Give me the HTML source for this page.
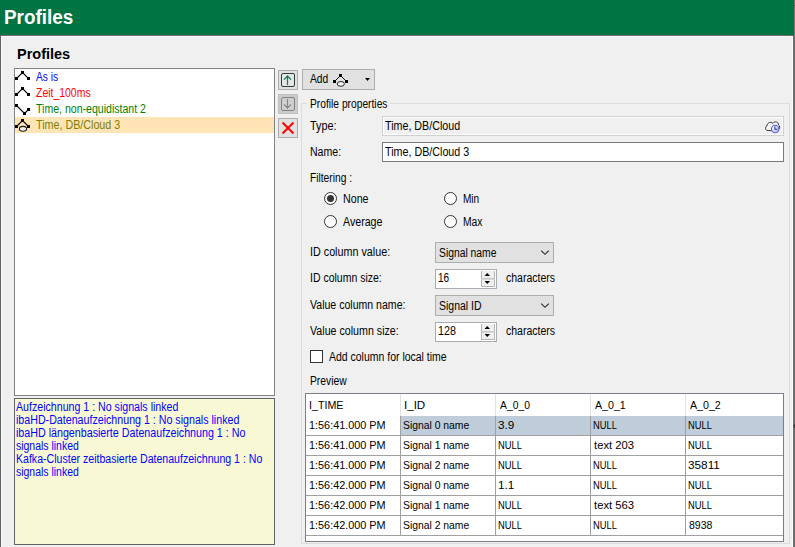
<!DOCTYPE html>
<html><head><meta charset="utf-8">
<style>
*{margin:0;padding:0;box-sizing:border-box}
html,body{width:795px;height:547px;overflow:hidden;background:#f0f0f0;position:relative;font-family:"Liberation Sans",sans-serif;font-size:11px;color:#000}
.a{position:absolute}
.t{position:absolute;white-space:pre;line-height:13px;font-size:11px;transform-origin:0 0}
#hdr{left:0;top:0;width:794px;height:35px;background:#017443}
#hdrR{left:794px;top:0;width:1px;height:547px;background:#7a7478}
#topline{left:0;top:35px;width:794px;height:1px;background:#6e6a6e}
#hl{left:1px;top:36px;width:792px;height:1px;background:#f8f8f8}
#lb{left:0;top:35px;width:1px;height:512px;background:#646464}
#lw{left:1px;top:36px;width:1px;height:511px;background:#f8f8f8}
#rb{left:793px;top:35px;width:2px;height:512px;background:#6d6d6d}
#rw{left:792px;top:36px;width:1px;height:511px;background:#fafafa}
.box{position:absolute;background:#fff;border:1px solid #828282}
.btn{position:absolute;background:#e1e1e1;border:1px solid #adadad}
.grp{position:absolute;border:1px solid #dcdcdc}
.radio{position:absolute;width:13px;height:13px;border:1px solid #333;border-radius:50%;background:#fff}
.combo{position:absolute;background:#e1e1e1;border:1px solid #adadad}
.spin{position:absolute;background:#fff;border:1px solid #a9acb3}
.tbl{position:absolute;background:#fff;border:1px solid #7a7f87}
.row{position:absolute;left:0;width:477px;height:1px;background:#a0a0a0}
.col{position:absolute;width:1px;background:#a0a0a0}
.sel{position:absolute;background:#bfcddb}
</style></head><body>
<div id="hdr" class="a"></div>
<div id="hdrR" class="a"></div>
<div class="a" style="left:794px;top:5px;width:1px;height:1px;background:#555"></div>
<div id="topline" class="a"></div>
<div id="hl" class="a"></div>
<div id="lb" class="a"></div>
<div id="lw" class="a"></div>
<div id="rw" class="a"></div>
<div id="rb" class="a"></div>


<div class="a" style="left:794px;top:424px;width:1px;height:4px;background:#3a3a3a"></div>
<div class="a" style="left:793px;top:425px;width:1px;height:2px;background:#555"></div>
<!-- tree list -->
<div class="box" style="left:14px;top:68px;width:261px;height:328px"></div>
<div class="a" style="left:15px;top:117px;width:259px;height:16px;background:#ffe4b5"></div>
<svg class="a" style="left:14px;top:68px" width="20" height="66" viewBox="0 0 20 66">
 <g stroke="#000" stroke-width="1.1" fill="none">
  <polyline points="2.5,10.5 8.5,4.5 14.5,10.5"/>
  <polyline points="2.5,26.5 8.5,20.5 14.5,26.5"/>
  <polyline points="2.5,37.5 10.5,45.5 14.5,41.5"/>
  <polyline points="2.5,58.5 8.5,52.5 14.5,58.5"/>
 </g>
 <g fill="#000">
  <rect x="1" y="9" width="3" height="3"/><rect x="7" y="3" width="3" height="3"/><rect x="13" y="9" width="3" height="3"/>
  <rect x="1" y="25" width="3" height="3"/><rect x="7" y="19" width="3" height="3"/><rect x="13" y="25" width="3" height="3"/>
  <rect x="1" y="36" width="3" height="3"/><rect x="9" y="44" width="3" height="3"/><rect x="13" y="40" width="3" height="3"/>
  <rect x="1" y="57" width="3" height="3"/><rect x="7" y="51" width="3" height="3"/><rect x="13" y="57" width="3" height="3"/>
 </g>
 <ellipse cx="9" cy="60.8" rx="3.6" ry="2.4" fill="#f2f2f2" stroke="#1a1a1a" stroke-width="1.1"/>
</svg>

<!-- info box -->
<div class="a" style="left:14px;top:398px;width:261px;height:147px;background:#f8f8d4;border:1px solid #646464"></div>

<!-- side buttons -->
<div class="btn" style="left:278px;top:70px;width:20px;height:20px"></div>
<div class="btn" style="left:278px;top:94px;width:20px;height:20px;background:#cccccc;border-color:#bfbfbf"></div>
<div class="btn" style="left:278px;top:118px;width:20px;height:20px"></div>
<svg class="a" style="left:278px;top:70px" width="20" height="68" viewBox="0 0 20 68">
 <rect x="3.5" y="3.5" width="13" height="13" rx="1.5" fill="#e6e6e6" stroke="#333b38" stroke-width="1"/>
 <g stroke="#107c50" stroke-width="1.25" fill="none"><line x1="9.5" y1="6" x2="9.5" y2="15"/><polyline points="6,9.6 9.5,6 13,9.6"/></g>
 <rect x="3.5" y="27.5" width="13" height="13" rx="1.5" fill="#cfcfcf" stroke="#808080" stroke-width="1"/>
 <g stroke="#858585" stroke-width="1.1" fill="none"><line x1="9.5" y1="29" x2="9.5" y2="38.5"/><polyline points="6,34.5 9.5,38 13,34.5"/></g>
 <g stroke="#ff0000" stroke-width="2"><line x1="4.5" y1="52.5" x2="15.5" y2="63.5"/><line x1="15.5" y1="52.5" x2="4.5" y2="63.5"/></g>
</svg>

<!-- add button -->
<div class="btn" style="left:302px;top:69px;width:73px;height:21px"></div>
<svg class="a" style="left:330px;top:70px" width="45" height="20" viewBox="0 0 45 20">
 <g stroke="#000" stroke-width="0.95" fill="none"><polyline points="4.5,11.5 10.5,5.5 16.5,11.5"/></g>
 <g fill="#000"><rect x="3" y="10" width="3" height="3"/><rect x="9" y="4" width="3" height="3"/><rect x="15" y="10" width="3" height="3"/></g>
 <ellipse cx="10.8" cy="13.9" rx="3.6" ry="2.4" fill="#f6f6f6" stroke="#1a1a1a" stroke-width="0.95"/>
 <polygon points="35,8 40,8 37.5,11" fill="#000"/>
</svg>

<!-- group -->
<div class="grp" style="left:301px;top:103px;width:489px;height:441px"></div>
<div class="a" style="left:307px;top:98px;width:83px;height:12px;background:#f0f0f0"></div>

<div class="a" style="left:382px;top:116px;width:402px;height:20px;border:1px solid #d0d0d0;box-shadow:inset 1px 1px 0 #fff, inset -1px -1px 0 #fff;background:#f0f0f0"></div>
<svg class="a" style="left:764px;top:119px" width="18" height="15" viewBox="0 0 18 15">
 <defs><radialGradient id="cg" cx="0.35" cy="0.35" r="0.8"><stop offset="0" stop-color="#ffffff"/><stop offset="1" stop-color="#aab4ee"/></radialGradient></defs>
 <path d="M4,11.6 C1.2,11.8 0.6,7.6 3,6.9 C3,3.6 7,2.4 8.8,4.4 C10.8,1.6 14.6,2.8 14.6,6 C16.2,6.6 16,9.8 14.5,10.6 L8,11.6 Z" fill="#f2f2f2" stroke="#3a3a3a" stroke-width="1"/>
 <circle cx="11.2" cy="10" r="3.7" fill="url(#cg)" stroke="#5561d0" stroke-width="1.1"/>
 <polyline points="10.9,7.4 10.9,10.3 13.4,10.3" fill="none" stroke="#252c8c" stroke-width="1.1"/>
</svg>

<div class="a" style="left:382px;top:142px;width:402px;height:20px;border:1px solid #7a7a7a;background:#fff"></div>

<div class="radio" style="left:324px;top:192px"></div>
<div class="a" style="left:327px;top:195px;width:7px;height:7px;border-radius:50%;background:#333"></div>
<div class="radio" style="left:444px;top:192px"></div>
<div class="radio" style="left:324px;top:215px"></div>
<div class="radio" style="left:444px;top:215px"></div>

<div class="combo" style="left:435px;top:242px;width:119px;height:21px"></div>
<svg class="a" style="left:540px;top:249px" width="11" height="7" viewBox="0 0 11 7"><polyline points="1.2,1.6 5,5.3 8.8,1.6" fill="none" stroke="#2b2b2b" stroke-width="1.15"/></svg>

<div class="spin" style="left:435px;top:269px;width:62px;height:20px"></div>
<svg class="a" style="left:481px;top:271px" width="14" height="16" viewBox="0 0 14 16">
 <rect x="0" y="0" width="14" height="16" fill="#f0f0f0"/>
 <path d="M0.5,0 V15.5 H13.5 V0" fill="none" stroke="#b4b4b4"/>
 <rect x="0" y="7" width="14" height="1.6" fill="#c9c9c9"/>
 <polygon points="3.5,5 9,5 6.25,2" fill="#000"/>
 <polygon points="3.5,10 9,10 6.25,13" fill="#000"/>
</svg>

<div class="combo" style="left:435px;top:295px;width:119px;height:21px"></div>
<svg class="a" style="left:540px;top:302px" width="11" height="7" viewBox="0 0 11 7"><polyline points="1.2,1.6 5,5.3 8.8,1.6" fill="none" stroke="#2b2b2b" stroke-width="1.15"/></svg>

<div class="spin" style="left:435px;top:322px;width:62px;height:20px"></div>
<svg class="a" style="left:481px;top:324px" width="14" height="16" viewBox="0 0 14 16">
 <rect x="0" y="0" width="14" height="16" fill="#f0f0f0"/>
 <path d="M0.5,0 V15.5 H13.5 V0" fill="none" stroke="#b4b4b4"/>
 <rect x="0" y="7" width="14" height="1.6" fill="#c9c9c9"/>
 <polygon points="3.5,5 9,5 6.25,2" fill="#000"/>
 <polygon points="3.5,10 9,10 6.25,13" fill="#000"/>
</svg>

<div class="a" style="left:310px;top:350px;width:13px;height:13px;border:1px solid #333;background:#fff"></div>


<!-- table -->
<div class="tbl" style="left:305px;top:393px;width:479px;height:149px"></div>
<div class="sel" style="left:401px;top:416px;width:382px;height:19px"></div>
<div class="a" style="left:306px;top:435px;width:477px;height:1px;background:#a0a0a0"></div>
<div class="a" style="left:306px;top:455px;width:477px;height:1px;background:#a0a0a0"></div>
<div class="a" style="left:306px;top:475px;width:477px;height:1px;background:#a0a0a0"></div>
<div class="a" style="left:306px;top:495px;width:477px;height:1px;background:#a0a0a0"></div>
<div class="a" style="left:306px;top:515px;width:477px;height:1px;background:#a0a0a0"></div>
<div class="a" style="left:306px;top:535px;width:477px;height:1px;background:#a0a0a0"></div>
<div class="a" style="left:400px;top:394px;width:1px;height:22px;background:#e3e3e3"></div>
<div class="a" style="left:400px;top:416px;width:1px;height:120px;background:#a0a0a0"></div>
<div class="a" style="left:495px;top:394px;width:1px;height:22px;background:#e3e3e3"></div>
<div class="a" style="left:495px;top:416px;width:1px;height:120px;background:#a0a0a0"></div>
<div class="a" style="left:590px;top:394px;width:1px;height:22px;background:#e3e3e3"></div>
<div class="a" style="left:590px;top:416px;width:1px;height:120px;background:#a0a0a0"></div>
<div class="a" style="left:685px;top:394px;width:1px;height:22px;background:#e3e3e3"></div>
<div class="a" style="left:685px;top:416px;width:1px;height:120px;background:#a0a0a0"></div>
<div class="t" style="left:4.00px;top:6px;font-size:20px;line-height:22px;color:#fff;transform:scaleX(0.9444);font-weight:bold">Profiles</div>
<div class="t" style="left:17.00px;top:46px;font-size:14.5px;line-height:16px;color:#000;transform:scaleX(1.0000);font-weight:bold">Profiles</div>
<div class="t" style="left:36.00px;top:71px;font-size:12px;line-height:13px;color:#0000ff;transform:scaleX(0.8462)">As is</div>
<div class="t" style="left:36.00px;top:87px;font-size:12px;line-height:13px;color:#ff0000;transform:scaleX(0.8710)">Zeit_100ms</div>
<div class="t" style="left:36.00px;top:103px;font-size:12px;line-height:13px;color:#008000;transform:scaleX(0.8800)">Time, non-equidistant 2</div>
<div class="t" style="left:36.00px;top:119px;font-size:12px;line-height:13px;color:#808000;transform:scaleX(0.8936)">Time, DB/Cloud 3</div>
<div class="t" style="left:16.00px;top:401px;font-size:12px;line-height:13px;color:#0000ff;transform:scaleX(0.8852)">Aufzeichnung 1 : No signals linked</div>
<div class="t" style="left:16.00px;top:414px;font-size:12px;line-height:13px;color:#0000ff;transform:scaleX(0.8880)">ibaHD-Datenaufzeichnung 1 : No signals linked</div>
<div class="t" style="left:16.00px;top:427px;font-size:12px;line-height:13px;color:#0000ff;transform:scaleX(0.8906)">ibaHD längenbasierte Datenaufzeichnung 1 : No</div>
<div class="t" style="left:16.00px;top:440px;font-size:12px;line-height:13px;color:#0000ff;transform:scaleX(0.8717)">signals linked</div>
<div class="t" style="left:16.00px;top:453px;font-size:12px;line-height:13px;color:#0000ff;transform:scaleX(0.8813)">Kafka-Cluster zeitbasierte Datenaufzeichnung 1 : No</div>
<div class="t" style="left:16.00px;top:466px;font-size:12px;line-height:13px;color:#0000ff;transform:scaleX(0.8717)">signals linked</div>
<div class="t" style="left:310.00px;top:73px;font-size:12px;line-height:13px;color:#000;transform:scaleX(0.8571)">Add</div>
<div class="t" style="left:310.00px;top:98px;font-size:12px;line-height:13px;color:#000;transform:scaleX(0.8539)">Profile properties</div>
<div class="t" style="left:310.00px;top:120px;font-size:12px;line-height:13px;color:#000;transform:scaleX(0.8995)">Type:</div>
<div class="t" style="left:385.00px;top:120px;font-size:12px;line-height:13px;color:#000;transform:scaleX(0.8929)">Time, DB/Cloud</div>
<div class="t" style="left:310.00px;top:146px;font-size:12px;line-height:13px;color:#000;transform:scaleX(0.8788)">Name:</div>
<div class="t" style="left:385.00px;top:146px;font-size:12px;line-height:13px;color:#000;transform:scaleX(0.8936)">Time, DB/Cloud 3</div>
<div class="t" style="left:310.00px;top:172px;font-size:12px;line-height:13px;color:#000;transform:scaleX(0.8511)">Filtering :</div>
<div class="t" style="left:343.00px;top:193px;font-size:12px;line-height:13px;color:#000;transform:scaleX(0.8889)">None</div>
<div class="t" style="left:463.00px;top:193px;font-size:12px;line-height:13px;color:#000;transform:scaleX(0.8376)">Min</div>
<div class="t" style="left:343.00px;top:216px;font-size:12px;line-height:13px;color:#000;transform:scaleX(0.8864)">Average</div>
<div class="t" style="left:463.00px;top:216px;font-size:12px;line-height:13px;color:#000;transform:scaleX(0.8571)">Max</div>
<div class="t" style="left:310.00px;top:246px;font-size:12px;line-height:13px;color:#000;transform:scaleX(0.8966)">ID column value:</div>
<div class="t" style="left:439.00px;top:247px;font-size:12px;line-height:13px;color:#000;transform:scaleX(0.8615)">Signal name</div>
<div class="t" style="left:310.00px;top:272px;font-size:12px;line-height:13px;color:#000;transform:scaleX(0.8750)">ID column size:</div>
<div class="t" style="left:438.00px;top:272px;font-size:12px;line-height:13px;color:#000;transform:scaleX(0.8333)">16</div>
<div class="t" style="left:506.00px;top:272px;font-size:12px;line-height:13px;color:#000;transform:scaleX(0.8750)">characters</div>
<div class="t" style="left:310.00px;top:299px;font-size:12px;line-height:13px;color:#000;transform:scaleX(0.8796)">Value column name:</div>
<div class="t" style="left:439.00px;top:300px;font-size:12px;line-height:13px;color:#000;transform:scaleX(0.8723)">Signal ID</div>
<div class="t" style="left:310.00px;top:325px;font-size:12px;line-height:13px;color:#000;transform:scaleX(0.8889)">Value column size:</div>
<div class="t" style="left:438.00px;top:325px;font-size:12px;line-height:13px;color:#000;transform:scaleX(0.8947)">128</div>
<div class="t" style="left:506.00px;top:325px;font-size:12px;line-height:13px;color:#000;transform:scaleX(0.8750)">characters</div>
<div class="t" style="left:329.00px;top:351px;font-size:12px;line-height:13px;color:#000;transform:scaleX(0.8731)">Add column for local time</div>
<div class="t" style="left:310.00px;top:375px;font-size:12px;line-height:13px;color:#000;transform:scaleX(0.8571)">Preview</div>
<div class="t" style="left:309.00px;top:399px;font-size:11px;line-height:13px;color:#000;transform:scaleX(0.9706)">I_TIME</div>
<div class="t" style="left:404.00px;top:399px;font-size:11px;line-height:13px;color:#000;transform:scaleX(1.0526)">I_ID</div>
<div class="t" style="left:500.00px;top:399px;font-size:11px;line-height:13px;color:#000;transform:scaleX(0.9396)">A_0_0</div>
<div class="t" style="left:595.00px;top:399px;font-size:11px;line-height:13px;color:#000;transform:scaleX(0.9677)">A_0_1</div>
<div class="t" style="left:690.00px;top:399px;font-size:11px;line-height:13px;color:#000;transform:scaleX(0.9677)">A_0_2</div>
<div class="t" style="left:309.00px;top:419px;font-size:11px;line-height:13px;color:#000;transform:scaleX(0.9868)">1:56:41.000 PM</div>
<div class="t" style="left:403.00px;top:419px;font-size:11px;line-height:13px;color:#000;transform:scaleX(0.9420)">Signal 0 name</div>
<div class="t" style="left:498.00px;top:419px;font-size:11px;line-height:13px;color:#000;transform:scaleX(1.0714)">3.9</div>
<div class="t" style="left:593.00px;top:419px;font-size:11px;line-height:13px;color:#000;transform:scaleX(0.8519)">NULL</div>
<div class="t" style="left:688.00px;top:419px;font-size:11px;line-height:13px;color:#000;transform:scaleX(0.8519)">NULL</div>
<div class="t" style="left:309.00px;top:439px;font-size:11px;line-height:13px;color:#000;transform:scaleX(0.9868)">1:56:41.000 PM</div>
<div class="t" style="left:403.00px;top:439px;font-size:11px;line-height:13px;color:#000;transform:scaleX(0.9420)">Signal 1 name</div>
<div class="t" style="left:498.00px;top:439px;font-size:11px;line-height:13px;color:#000;transform:scaleX(0.8519)">NULL</div>
<div class="t" style="left:594.00px;top:439px;font-size:11px;line-height:13px;color:#000;transform:scaleX(1.0256)">text 203</div>
<div class="t" style="left:688.00px;top:439px;font-size:11px;line-height:13px;color:#000;transform:scaleX(0.8519)">NULL</div>
<div class="t" style="left:309.00px;top:459px;font-size:11px;line-height:13px;color:#000;transform:scaleX(0.9868)">1:56:41.000 PM</div>
<div class="t" style="left:403.00px;top:459px;font-size:11px;line-height:13px;color:#000;transform:scaleX(0.9420)">Signal 2 name</div>
<div class="t" style="left:498.00px;top:459px;font-size:11px;line-height:13px;color:#000;transform:scaleX(0.8519)">NULL</div>
<div class="t" style="left:593.00px;top:459px;font-size:11px;line-height:13px;color:#000;transform:scaleX(0.8519)">NULL</div>
<div class="t" style="left:688.00px;top:459px;font-size:11px;line-height:13px;color:#000;transform:scaleX(1.0714)">35811</div>
<div class="t" style="left:309.00px;top:479px;font-size:11px;line-height:13px;color:#000;transform:scaleX(0.9868)">1:56:42.000 PM</div>
<div class="t" style="left:403.00px;top:479px;font-size:11px;line-height:13px;color:#000;transform:scaleX(0.9420)">Signal 0 name</div>
<div class="t" style="left:498.00px;top:479px;font-size:11px;line-height:13px;color:#000;transform:scaleX(1.0714)">1.1</div>
<div class="t" style="left:593.00px;top:479px;font-size:11px;line-height:13px;color:#000;transform:scaleX(0.8519)">NULL</div>
<div class="t" style="left:688.00px;top:479px;font-size:11px;line-height:13px;color:#000;transform:scaleX(0.8519)">NULL</div>
<div class="t" style="left:309.00px;top:499px;font-size:11px;line-height:13px;color:#000;transform:scaleX(0.9868)">1:56:42.000 PM</div>
<div class="t" style="left:403.00px;top:499px;font-size:11px;line-height:13px;color:#000;transform:scaleX(0.9420)">Signal 1 name</div>
<div class="t" style="left:498.00px;top:499px;font-size:11px;line-height:13px;color:#000;transform:scaleX(0.8519)">NULL</div>
<div class="t" style="left:594.00px;top:499px;font-size:11px;line-height:13px;color:#000;transform:scaleX(1.0256)">text 563</div>
<div class="t" style="left:688.00px;top:499px;font-size:11px;line-height:13px;color:#000;transform:scaleX(0.8519)">NULL</div>
<div class="t" style="left:309.00px;top:519px;font-size:11px;line-height:13px;color:#000;transform:scaleX(0.9868)">1:56:42.000 PM</div>
<div class="t" style="left:403.00px;top:519px;font-size:11px;line-height:13px;color:#000;transform:scaleX(0.9420)">Signal 2 name</div>
<div class="t" style="left:498.00px;top:519px;font-size:11px;line-height:13px;color:#000;transform:scaleX(0.8519)">NULL</div>
<div class="t" style="left:593.00px;top:519px;font-size:11px;line-height:13px;color:#000;transform:scaleX(0.8519)">NULL</div>
<div class="t" style="left:689.00px;top:519px;font-size:11px;line-height:13px;color:#000;transform:scaleX(0.9583)">8938</div>
</body></html>
